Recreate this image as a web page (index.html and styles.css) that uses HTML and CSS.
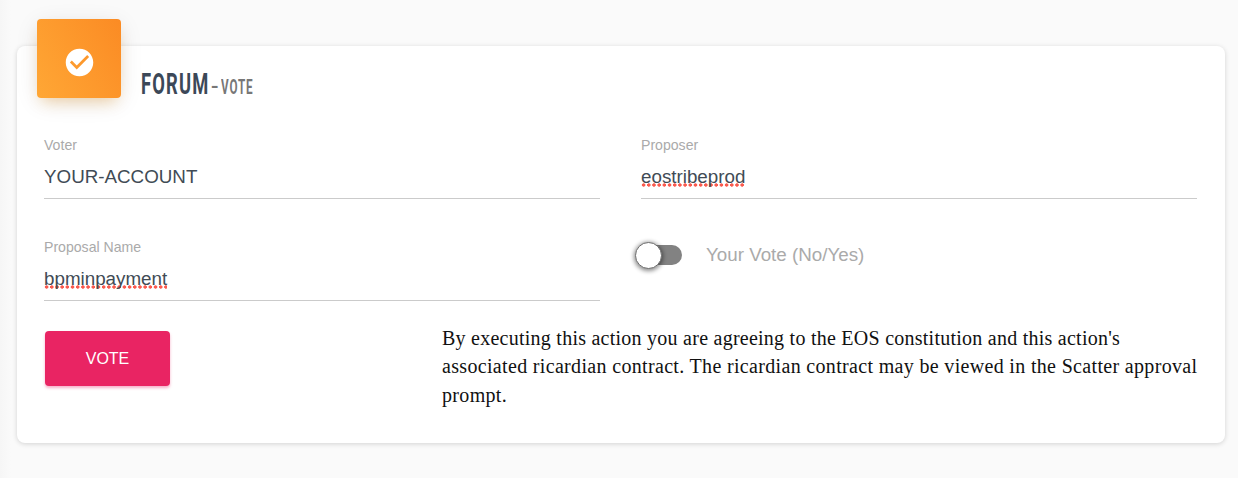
FILE: index.html
```html
<!DOCTYPE html>
<html lang="en">
<head>
    <meta charset="UTF-8">
    <meta name="viewport" content="width=device-width, initial-scale=1.0">
    <title>Forum - Vote</title>
    <link rel="stylesheet" href="styles.css">
</head>
<body>

<main class="content">
    <div class="card">
        <div class="card-header">
            <div class="card-icon">
                <svg viewBox="0 0 24 24" width="33" height="33">
                    <path fill="#fff" d="M12 2C6.48 2 2 6.48 2 12s4.48 10 10 10 10-4.48 10-10S17.52 2 12 2zm-2 15l-5-5 1.41-1.41L10 14.17l7.59-7.59L19 8l-9 9z"/>
                </svg>
            </div>
            <h4 class="card-title"><span class="title-main">FORUM</span><small class="title-dash">-</small><small class="title-sub">VOTE</small></h4>
        </div>

        <form class="form-grid" id="voteForm">
            <div class="field">
                <label class="field-label">Voter</label>
                <div class="field-value">YOUR-ACCOUNT</div>
            </div>
            <div class="field">
                <label class="field-label">Proposer</label>
                <div class="field-value"><span class="misspelled">eostribeprod</span></div>
            </div>
            <div class="field">
                <label class="field-label">Proposal Name</label>
                <div class="field-value"><span class="misspelled">bpminpayment</span></div>
            </div>
            <div class="toggle-row">
                <span class="toggle"><span class="toggle-knob"></span></span>
                <span class="toggle-label">Your Vote (No/Yes)</span>
            </div>
        </form>

        <div class="card-footer">
            <button type="submit" form="voteForm" class="vote-button">VOTE</button>
            <p class="notice">By executing this action you are agreeing to the EOS constitution and this action's <span class="notice-wide">associated ricardian contract. The ricardian contract may be viewed in the Scatter approval prompt.</span></p>
        </div>
    </div>
</main>

</body>
</html>
```
FILE: styles.css
```css
* { margin: 0; padding: 0; box-sizing: border-box; }
body { font-family: "Liberation Sans", Arial, sans-serif; background: #fff; color: #3c4858; overflow: hidden; }
.content {
    height: 478px; padding: 46px 13px 0 17px;
    background: linear-gradient(to right, #f6f6f6, #fafafa 11px);
}
.card {
    height: 397px; padding: 0 28px 0 27px;
    background: #fff; border-radius: 8px;
    box-shadow: 0 1px 5px rgba(0, 0, 0, 0.16);
}

/* header */
.card-header { display: flex; height: 91px; margin-left: -7px; }
.card-icon {
    display: flex; align-items: center; justify-content: center;
    width: 84px; height: 79px; margin-top: -27px; padding-top: 7px;
    border-radius: 4px;
    background: linear-gradient(60deg, #ffa735, #fb8b24);
    box-shadow: 0 5px 24px -2px rgba(0, 0, 0, 0.12), 0 8px 14px -5px rgba(255, 152, 0, 0.3);
}
.card-title {
    display: flex; align-items: baseline; height: 36px;
    margin: 20px 0 0 20px; font-family: Roboto, sans-serif;
    font-size: 30px; line-height: 36px; font-weight: 700; white-space: nowrap;
}
.title-main, .title-sub { display: block; transform-origin: 0 50%; }
.title-main { width: 70px; letter-spacing: 2px; transform: scaleX(0.61); }
.title-dash { width: 10px; font-size: 22px; font-weight: 500; color: #777; }
.title-sub { width: 34px; font-size: 20.5px; font-weight: 700; letter-spacing: 1.5px; color: #777; transform: scaleX(0.57); }

/* fields */
.form-grid { display: grid; grid-template-columns: 556px 556px; column-gap: 41px; grid-template-rows: 62px 62px; row-gap: 40px; }
.field { border-bottom: 1px solid #cbcbcb; }
.field-label { display: block; font-size: 14.1px; line-height: 16px; color: #aaa; }
.field-value { margin-top: 11px; font-size: 18.8px; line-height: 26px; color: #414b55; }
.misspelled {
    display: inline-block; height: 26px;
    background: radial-gradient(circle at 50% 50%, #fa5a4e 1.4px, transparent 2px) 0 19px / 5.2px 4px repeat-x;
}
.toggle-row { display: flex; align-items: center; height: 32px; }
.toggle { display: flex; align-items: center; width: 41px; height: 20px; border-radius: 10px; background: #828282; }
.toggle-knob {
    flex: none; width: 27px; height: 27px; margin-left: -6px; border-radius: 50%;
    background: #fff; border: 1px solid #6d6d6d;
    box-shadow: 0 1px 4px 1px rgba(0, 0, 0, 0.45);
}
.toggle-label { margin-left: 24px; font-size: 18.8px; color: #aaa; }

/* footer */
.card-footer { display: flex; align-items: flex-start; margin-top: 23px; }
.vote-button {
    width: 125px; height: 55px; margin: 7px 0 0 1px;
    font-family: inherit; font-size: 16px; color: #fff;
    background: #e92463; border: none; border-radius: 4px;
    box-shadow: 0 2px 3px rgba(233, 30, 99, 0.35); cursor: pointer;
}
.notice {
    width: 765px; margin: 0 -10px 0 272px;
    font-family: Georgia, "Liberation Serif", serif; font-size: 20px; line-height: 28.4px;
    letter-spacing: 0.25px; color: #111;
}
.notice-wide { letter-spacing: 0.33px; }
```
